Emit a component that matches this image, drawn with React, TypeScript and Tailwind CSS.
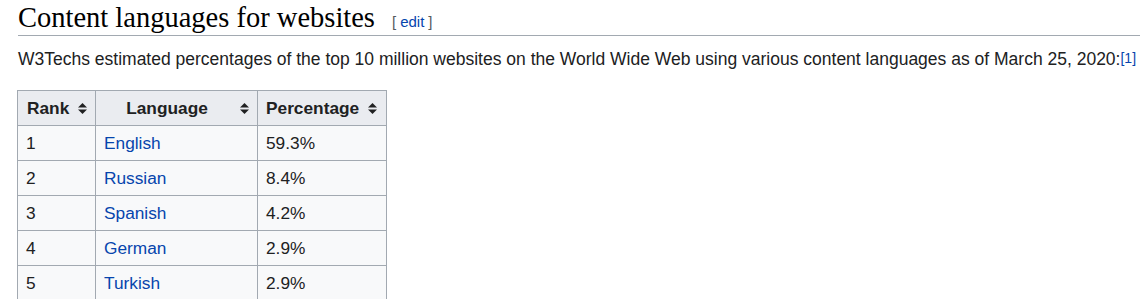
import React from "react";

const SortIcon = () => (
  <svg width="9" height="11" viewBox="0 0 9 11" className="inline-block shrink-0">
    <path d="M4.5 0 L9 4.5 L0 4.5 Z" fill="#202122" />
    <path d="M4.5 11 L9 6.5 L0 6.5 Z" fill="#202122" />
  </svg>
);

const rows = [
  ["1", "English", "59.3%"],
  ["2", "Russian", "8.4%"],
  ["3", "Spanish", "4.2%"],
  ["4", "German", "2.9%"],
  ["5", "Turkish", "2.9%"],
];

export default function App() {
  return (
    <div className="bg-white w-[1140px] h-[299px] overflow-hidden text-[#202122]" style={{ fontFamily: '"Liberation Sans", Arial, sans-serif' }}>
      <div className="pl-[18px] pr-[4px]">
        <div className="flex items-baseline border-b border-[#a2a9b1] h-[36px] pt-[3px] w-[1122px]">
          <h2 className="text-[28.5px] leading-[30px] text-black" style={{ fontFamily: '"Liberation Serif", "DejaVu Serif", serif' }}>
            Content languages for websites
          </h2>
          <span className="ml-[17px] text-[15px] text-[#54595d]">
            [<span className="text-[#0645ad] mx-[4px]">edit</span>]
          </span>
        </div>
        <p className="text-[17.5px] leading-[22px] mt-[12px] whitespace-nowrap">
          W3Techs estimated percentages of the top 10 million websites on the World Wide Web using various content languages as of March 25, 2020:
          <sup className="text-[#0645ad] text-[14px] relative -top-[2px]">[1]</sup>
        </p>
      </div>
      <table className="ml-[17px] mt-[20px] border-collapse border border-[#a2a9b1] bg-[#f8f9fa] text-[17.3px] leading-[22px]">
        <thead>
          <tr className="bg-[#eaecf0]">
            <th className="border border-[#a2a9b1] h-[35px] w-[78px] text-left pl-[9px] pr-[8px] font-bold">
              <span className="flex items-center justify-between">Rank <SortIcon /></span>
            </th>
            <th className="border border-[#a2a9b1] h-[35px] w-[162px] pl-[8px] pr-[8px] font-bold">
              <span className="flex items-center justify-between"><span className="flex-1 text-center pr-[10px]">Language</span> <SortIcon /></span>
            </th>
            <th className="border border-[#a2a9b1] h-[35px] w-[129px] pl-[8px] pr-[9px] font-bold">
              <span className="flex items-center justify-between">Percentage <SortIcon /></span>
            </th>
          </tr>
        </thead>
        <tbody>
          {rows.map((r) => (
            <tr key={r[0]}>
              <td className="border border-[#a2a9b1] h-[35px] pl-[8px]">{r[0]}</td>
              <td className="border border-[#a2a9b1] h-[35px] pl-[8px] text-[#0645ad]">{r[1]}</td>
              <td className="border border-[#a2a9b1] h-[35px] pl-[8px]">{r[2]}</td>
            </tr>
          ))}
        </tbody>
      </table>
    </div>
  );
}
